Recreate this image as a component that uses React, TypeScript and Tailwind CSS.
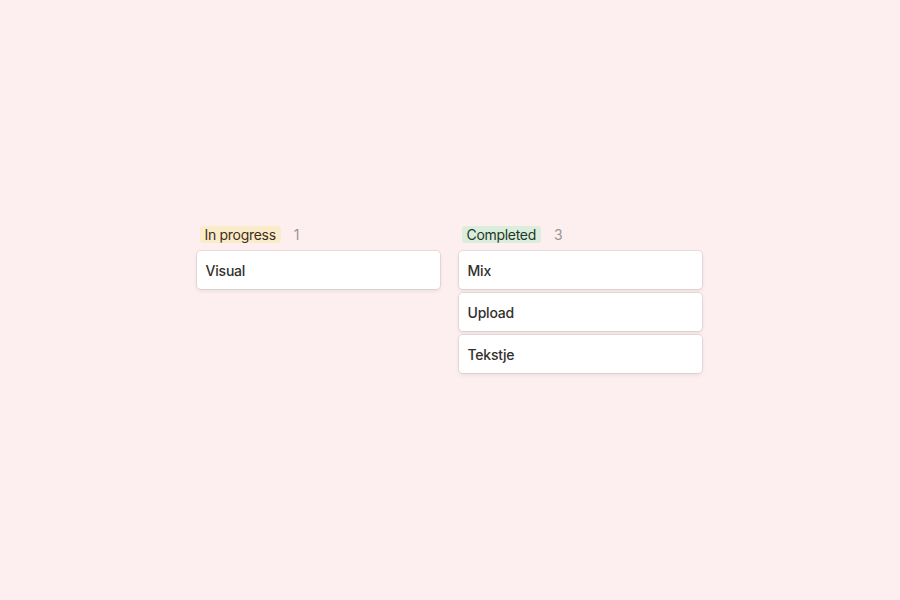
const columns = [
  {
    title: "In progress",
    pill: "bg-[#fbecc9] text-[#402c1b]",
    cards: ["Visual"],
  },
  {
    title: "Completed",
    pill: "bg-[#dbeddb] text-[#1c3829]",
    cards: ["Mix", "Upload", "Tekstje"],
  },
];

export default function App() {
  return (
    <div
      className="w-full h-[600px] bg-[#fdefef] flex items-center justify-center"
      style={{ fontFamily: "Inter, 'Noto Sans', sans-serif" }}
    >
      <div className="flex gap-[19px] items-start h-[148px] -mt-[2px] mr-[2px]">
        {columns.map((col) => (
          <div key={col.title} className="w-[243px] flex flex-col">
            <div className="flex items-center gap-[13px] h-[18px] pl-[3px] mb-[8px]">
              <span className={`px-[5px] h-[17px] leading-[17px] rounded-[3px] text-[14px] tracking-[-0.3px] ${col.pill}`}>
                {col.title}
              </span>
              <span className="text-[14px] text-[#9b9593]">{col.cards.length}</span>
            </div>
            <div className="flex flex-col gap-[4px]">
              {col.cards.map((c) => (
                <div
                  key={c}
                  className="h-[38px] bg-white rounded-[4px] px-[9px] flex items-center text-[14px] tracking-[-0.2px] font-medium text-[#32302c] shadow-[0_0_0_1px_rgba(15,15,15,0.08),0_2px_4px_rgba(15,15,15,0.08)]"
                >
                  {c}
                </div>
              ))}
            </div>
          </div>
        ))}
      </div>
    </div>
  );
}
